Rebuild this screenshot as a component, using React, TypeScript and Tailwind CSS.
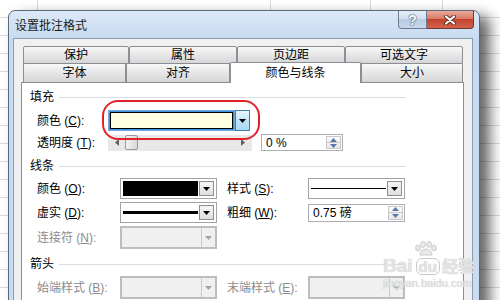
const FONT = "font-['Liberation_Sans','Noto_Sans_CJK_SC',sans-serif]";

function DownArrow({ color = "#000" }: { color?: string }) {
  return (
    <svg width="7" height="4" viewBox="0 0 7 4">
      <path d="M0 0h7L3.5 4z" fill={color} />
    </svg>
  );
}

function SpinButtons() {
  return (
    <div className="my-[1px] mr-[1px] flex w-[15px] flex-col border border-[#c9c9c9] bg-[linear-gradient(to_bottom,#fbfbfb,#e8e8e8)]">
      <div className="flex flex-1 items-center justify-center border-b border-[#c9c9c9]">
        <svg width="7" height="4" viewBox="0 0 7 4">
          <path d="M3.5 0L7 4H0z" fill="#5b77a8" />
        </svg>
      </div>
      <div className="flex flex-1 items-center justify-center">
        <DownArrow color="#5b77a8" />
      </div>
    </div>
  );
}

function Combo({ children }: { children?: React.ReactNode }) {
  return (
    <div className="flex h-[21px] w-[97px] gap-[1px] border border-[#a3a3a3] bg-white p-[2px]">
      <div className="flex flex-1 items-center">{children}</div>
      <div className="flex w-[15px] items-center justify-center border border-[#8e8e8e] bg-[linear-gradient(to_bottom,#f6f6f6,#dedede)]">
        <DownArrow />
      </div>
    </div>
  );
}

function DisabledCombo() {
  return (
    <div className="flex h-[23px] w-[97px] border-2 border-[#bdbdbd] bg-[#f0f0f0]">
      <div className="flex-1" />
      <div className="flex w-[14px] items-center justify-center border-l border-[#cacaca]">
        <DownArrow color="#a3a3a3" />
      </div>
    </div>
  );
}

function Heading({ text, className }: { text: string; className: string }) {
  return (
    <div className={`ml-[8px] flex h-[20px] w-[376px] shrink-0 items-center gap-[5px] ${className}`}>
      <span className="text-[12px] leading-none text-black">{text}</span>
      <div className="h-px flex-1 bg-[#d5dde5]" />
    </div>
  );
}

function Tab({ label, w }: { label: string; w: string }) {
  return (
    <div
      className={`flex items-center justify-center rounded-t-[2px] border border-[#8b8e96] bg-[linear-gradient(to_bottom,#f8f8f8,#e6e6e6_50%,#d6d6d6)] text-[12px] leading-none text-black ${w}`}
    >
      {label}
    </div>
  );
}

function Watermark() {
  return (
    <div className="pointer-events-none absolute left-[383px] top-[241px] flex flex-col text-[#e4e4e4] [text-shadow:0_0_1px_#b8b8b8]">
      <svg className="ml-[31px]" width="24" height="15" viewBox="0 0 24 15">
        <g fill="#e8e8e8" stroke="#c4c4c4" strokeWidth="0.8">
          <ellipse cx="4" cy="7" rx="2.4" ry="3" />
          <ellipse cx="9" cy="3.4" rx="2.4" ry="3" />
          <ellipse cx="15" cy="3.4" rx="2.4" ry="3" />
          <ellipse cx="20" cy="7" rx="2.4" ry="3" />
          <path d="M6 14c0-4 3-6 6-6s6 2 6 6z" />
        </g>
      </svg>
      <div className="flex items-end leading-none">
        <span className="text-[19px] font-bold">Bai</span>
        <span className="ml-[3px] rounded-[6px] border border-[#c8c8c8] px-[2px] text-[15px] font-bold">du</span>
        <span className="ml-[2px] text-[16px] font-bold">经验</span>
      </div>
      <div className="mt-[3px] text-[11px] leading-none">jingyan.baidu.com</div>
    </div>
  );
}

export default function App() {
  return (
    <div
      className={`relative h-[300px] w-[500px] overflow-hidden bg-white bg-[linear-gradient(90deg,transparent_37px,#dadada_37px,#dadada_38px,transparent_38px,transparent_270px,#dadada_270px,#dadada_271px,transparent_271px,transparent_370px,#dadada_370px,#dadada_371px,transparent_371px,transparent_442px,#dadada_442px,#dadada_443px,transparent_443px),repeating-linear-gradient(180deg,transparent_0px,transparent_17px,#dadada_17px,#dadada_18px)] pl-[8px] pt-[10px] ${FONT}`}
    >
      <div className="flex w-[472px] flex-col rounded-t-[7px] border border-[#59697e] bg-[linear-gradient(to_bottom,#dce8f6,#c6daf1_28px,#cadcf1)] shadow-[10px_6px_14px_rgba(0,0,0,0.6)]">
        {/* title bar */}
        <div className="flex h-[27px] shrink-0 items-start">
          <span className="pl-[6px] pt-[8px] text-[12px] leading-[14px] text-[#1b1b1b]">设置批注格式</span>
          <div className="ml-auto mr-[5px] flex">
            <div className="flex h-[18px] w-[29px] items-center justify-center rounded-bl-[4px] border border-t-0 border-[#6a7c93] bg-[linear-gradient(to_bottom,#e6eef8,#d3e0f0_45%,#b8cbe2_50%,#c8d7ea)] text-[14px] font-bold leading-none text-white [text-shadow:0_0_2px_#2d3f58,0_0_1px_#2d3f58]">
              ?
            </div>
            <div className="flex h-[18px] w-[47px] items-center justify-center rounded-br-[4px] border border-l-0 border-t-0 border-[#6e3a31] bg-[linear-gradient(to_bottom,#eaa99b,#d97b67_45%,#c5432d_50%,#d2634c)]">
              <svg width="14" height="10" viewBox="0 0 14 10">
                <path d="M3 1.5l8 7M11 1.5l-8 7" stroke="#5a2a22" strokeWidth="4" strokeLinecap="round" />
                <path d="M3 1.5l8 7M11 1.5l-8 7" stroke="#fff" strokeWidth="2.2" strokeLinecap="round" />
              </svg>
            </div>
          </div>
        </div>

        {/* client area */}
        <div className="mb-[6px] ml-[4px] flex w-[460px] flex-col border border-[#8d9db1] bg-[#f0f0f0] pl-[7px] pt-[7px]">
          <div className="ml-[2px] flex w-[440px] flex-col">
            <div className="flex h-[18px]">
              <Tab label="保护" w="w-[106px]" />
              <Tab label="属性" w="w-[108px]" />
              <Tab label="页边距" w="w-[108px]" />
              <Tab label="可选文字" w="w-[118px]" />
            </div>
            <div className="-mt-[1px] flex h-[19px] items-end">
              <div className="flex h-[19px] w-[103px] items-center justify-center rounded-t-[2px] border border-b-0 border-[#8b8e96] bg-[linear-gradient(to_bottom,#f8f8f8,#e6e6e6_50%,#d6d6d6)] text-[12px] leading-none">
                字体
              </div>
              <div className="flex h-[19px] w-[104px] items-center justify-center rounded-t-[2px] border border-b-0 border-[#8b8e96] bg-[linear-gradient(to_bottom,#f8f8f8,#e6e6e6_50%,#d6d6d6)] text-[12px] leading-none">
                对齐
              </div>
              <div className="relative z-10 -mb-[1px] flex h-[21px] w-[131px] items-center justify-center rounded-t-[2px] border border-b-0 border-[#8b8e96] bg-white pb-[1px] text-[12px] leading-none">
                颜色与线条
              </div>
              <div className="flex h-[19px] w-[102px] items-center justify-center rounded-t-[2px] border border-b-0 border-[#8b8e96] bg-[linear-gradient(to_bottom,#f8f8f8,#e6e6e6_50%,#d6d6d6)] text-[12px] leading-none">
                大小
              </div>
            </div>
          </div>

          {/* panel */}
          <div className="relative flex h-[260px] w-[443px] flex-col border border-[#8b8e96] bg-white text-[12px] leading-none">
            <Heading text="填充" className="mt-[4px]" />

            <div className="ml-[15px] mt-[3px] flex h-[21px] shrink-0 items-center">
              <span className="w-[71px]">
                颜色 (<span className="underline">C</span>):
              </span>
              <div className="flex h-[21px] w-[142px]">
                <div className="flex-1 border border-[#72a8de] bg-[#3a92e6] p-[1px]">
                  <div className="h-full border border-black bg-[#ffffe1]" />
                </div>
                <div className="flex w-[15px] items-center justify-center border border-[#3c7fb1] bg-[linear-gradient(to_bottom,#eaf6fd,#bee4f8_50%,#a7d9f5)]">
                  <DownArrow />
                </div>
              </div>
            </div>

            <div className="ml-[15px] mt-[3px] flex h-[17px] shrink-0 items-center">
              <span className="w-[71px]">
                透明度 (<span className="underline">T</span>):
              </span>
              <div className="flex h-[16px] w-[144px] items-center bg-[#e8e8e8] px-[7px]">
                <svg width="4" height="7" viewBox="0 0 4 7">
                  <path d="M4 0v7L0 3.5z" fill="#606060" />
                </svg>
                <div className="ml-[6px] h-[15px] w-[13px] rounded-[2px] border border-[#979797] bg-[linear-gradient(to_right,#f2f2f2,#d9d9d9)]" />
                <div className="flex-1" />
                <svg width="4" height="7" viewBox="0 0 4 7">
                  <path d="M0 0v7L4 3.5z" fill="#606060" />
                </svg>
              </div>
              <div className="ml-[9px] flex h-[17px] w-[82px] border border-[#abadb3] bg-white">
                <span className="flex flex-1 items-center pl-[4px]">0 %</span>
                <SpinButtons />
              </div>
            </div>

            <Heading text="线条" className="mt-[5px]" />

            <div className="ml-[15px] mt-[2px] flex h-[21px] shrink-0 items-center">
              <span className="w-[83px]">
                颜色 (<span className="underline">O</span>):
              </span>
              <Combo>
                <div className="h-full w-full bg-black" />
              </Combo>
              <span className="ml-[10px] w-[81px]">
                样式 (<span className="underline">S</span>):
              </span>
              <Combo>
                <div className="h-px w-full bg-black" />
              </Combo>
            </div>

            <div className="ml-[15px] mt-[3px] flex h-[21px] shrink-0 items-center">
              <span className="w-[83px]">
                虚实 (<span className="underline">D</span>):
              </span>
              <Combo>
                <div className="h-[3px] w-full bg-black" />
              </Combo>
              <span className="ml-[10px] w-[81px]">
                粗细 (<span className="underline">W</span>):
              </span>
              <div className="flex h-[18px] w-[97px] border border-[#abadb3] bg-white">
                <span className="flex flex-1 items-center pl-[4px]">0.75 磅</span>
                <SpinButtons />
              </div>
            </div>

            <div className="ml-[15px] mt-[3px] flex h-[23px] shrink-0 items-center text-[#8b8b8b]">
              <span className="w-[83px]">
                连接符 (<span className="underline">N</span>):
              </span>
              <DisabledCombo />
            </div>

            <Heading text="箭头" className="mt-[5px]" />

            <div className="ml-[15px] mt-[2px] flex h-[23px] shrink-0 items-center text-[#8b8b8b]">
              <span className="w-[83px]">
                始端样式 (<span className="underline">B</span>):
              </span>
              <DisabledCombo />
              <span className="ml-[10px] w-[81px]">
                末端样式 (<span className="underline">E</span>):
              </span>
              <DisabledCombo />
            </div>

            {/* red annotation ring */}
            <div className="pointer-events-none absolute left-[80px] top-[17px] h-[40px] w-[158px] rounded-[16px] border-2 border-[#e0232b]" />
          </div>
        </div>
      </div>
      <Watermark />
    </div>
  );
}
